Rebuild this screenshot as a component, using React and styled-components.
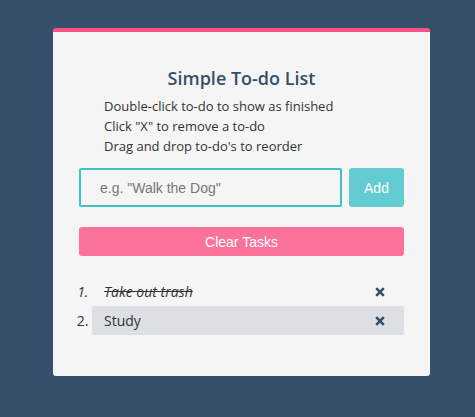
import React, { useState } from 'react';
import styled, { createGlobalStyle } from 'styled-components';

const GlobalStyle = createGlobalStyle`
  html, body {
    margin: 0;
    padding: 0;
    background: #364f6b;
  }
  body {
    font-family: "Open Sans", "Liberation Sans", sans-serif;
  }
`;

const Page = styled.div`
  width: 475px;
  height: 417px;
  padding: 28px 0 0 53px;
  box-sizing: border-box;
`;

const Card = styled.div`
  width: 377px;
  height: 348px;
  box-sizing: border-box;
  background: #f5f5f5;
  border-top: 4px solid #fc5185;
  border-radius: 3px;
  padding: 34px 26px 0;
`;

const Title = styled.h1`
  margin: 0;
  font-size: 18px;
  line-height: 24px;
  font-weight: 600;
  text-align: center;
  color: #364f6b;
`;

const Help = styled.div`
  margin: 6px 0 0;
  padding-left: 25px;
  font-size: 13px;
  line-height: 20px;
  color: #333;
`;

const Form = styled.form`
  display: flex;
  gap: 7px;
  margin-top: 12px;
`;

const Input = styled.input`
  flex: 1;
  height: 39px;
  box-sizing: border-box;
  border: 2px solid #3fc1c9;
  border-radius: 2px;
  background: #f5f5f5;
  padding: 0 19px;
  font-family: "Liberation Sans", Arial, sans-serif;
  font-size: 14px;
  color: #333;
  outline: none;
  &::placeholder {
    color: #777;
  }
`;

const Button = styled.button`
  border: none;
  border-radius: 3px;
  color: #fff;
  font-family: "Liberation Sans", Arial, sans-serif;
  font-size: 14px;
  background: ${p => p.$pink ? 'rgba(252, 81, 133, 0.8)' : 'rgba(63, 193, 201, 0.8)'};
  width: ${p => p.$wide ? '100%' : '55px'};
  height: ${p => p.$wide ? '29px' : '39px'};
  padding: 0;
  cursor: pointer;
`;

const ClearRow = styled.div`
  margin-top: 20px;
`;

const List = styled.ol`
  margin: 21px 0 0;
  padding: 0 0 0 13px;
  font-size: 14px;
  color: #333;
`;

const Item = styled.li`
  height: 29px;
  padding: 0 19px 0 12px;
  border-radius: 2px;
  line-height: 29px;
  background: ${p => p.$active ? '#dcdfe3' : 'transparent'};
  font-style: ${p => p.$done ? 'italic' : 'normal'};
  cursor: pointer;
`;

const ItemInner = styled.div`
  display: flex;
  align-items: center;
  justify-content: space-between;
`;

const ItemText = styled.span`
  text-decoration: ${p => p.$done ? 'line-through' : 'none'};
`;

const Remove = styled.span`
  display: flex;
  align-items: center;
`;

const XIcon = () => (
  <svg width="10" height="10" viewBox="0 0 10 10">
    <path d="M1.2 1.2 L8.8 8.8 M8.8 1.2 L1.2 8.8" stroke="#364f6b" strokeWidth="2.6" strokeLinecap="butt" />
  </svg>
);

export default function App() {
  const [todos, setTodos] = useState([
    { text: 'Take out trash', done: true },
    { text: 'Study', done: false },
  ]);

  return (
    <Page>
      <GlobalStyle />
      <Card>
        <Title>Simple To-do List</Title>
        <Help>
          Double-click to-do to show as finished<br />
          Click "X" to remove a to-do<br />
          Drag and drop to-do's to reorder
        </Help>
        <Form onSubmit={e => e.preventDefault()}>
          <Input placeholder={'e.g. "Walk the Dog"'} />
          <Button type="submit">Add</Button>
        </Form>
        <ClearRow>
          <Button $pink $wide type="button" onClick={() => setTodos([])}>Clear Tasks</Button>
        </ClearRow>
        <List>
          {todos.map((t, i) => (
            <Item key={i} $done={t.done} $active={i === 1}>
              <ItemInner>
                <ItemText $done={t.done}>{t.text}</ItemText>
                <Remove><XIcon /></Remove>
              </ItemInner>
            </Item>
          ))}
        </List>
      </Card>
    </Page>
  );
}
